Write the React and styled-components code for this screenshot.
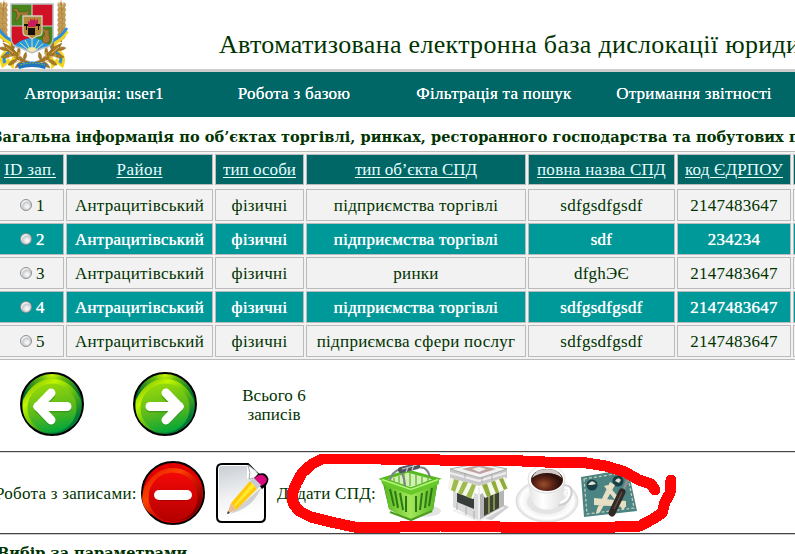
import React from 'react';
import styled, { createGlobalStyle, css } from 'styled-components';

const GlobalStyle = createGlobalStyle`
  * { box-sizing: border-box; }
  html, body { margin: 0; padding: 0; background: #fff; overflow: hidden; }
`;

const Page = styled.div`
  width: 795px;
  height: 554px;
  overflow: hidden;
  background: #fff;
  color: #003300;
  font-family: 'Liberation Serif', 'Times New Roman', serif;
  font-size: 17px;
  line-height: 18px;
  letter-spacing: 0.27px;
  white-space: nowrap;
`;

const Header = styled.header`
  display: flex;
  height: 72px;
  border-bottom: 3px solid #cccccc;
`;

const Emblem = styled.svg`
  flex: none;
  width: 70px;
  height: 69px;
`;

const Title = styled.h1`
  margin: 30px 0 0 149px;
  font-size: 26px;
  line-height: 30px;
  font-weight: 400;
  letter-spacing: 0.31px;
`;

const Nav = styled.nav`
  display: grid;
  grid-template-columns: repeat(4, 200px);
  align-items: center;
  height: 45px;
  margin-left: -6px;
  width: 810px;
  padding-bottom: 1px;
  background: #006666;
  color: #fff;
  text-align: center;
  text-shadow: 0 0 0.6px #fff;
`;

const Caption = styled.h2`
  margin: 0;
  height: 34px;
  padding-top: 11px;
  margin-left: -8px;
  font-family: 'DejaVu Serif', serif;
  font-size: 14.5px;
  line-height: 18px;
  font-weight: 700;
  letter-spacing: 0.05px;
`;

const Table = styled.div`
  display: flex;
  flex-direction: column;
  gap: 2px;
  height: 209px;
  width: 910px;
  margin-left: -7px;
  padding: 2px;
  background: #f2f2f2;
  border: 1px solid #bbbbbb;
`;

const TableRow = styled.div`
  display: grid;
  grid-template-columns: 68px 147px 89px 220px 147px 114px 100px;
  gap: 2px;
  height: 32px;
`;

const HeadRow = styled(TableRow)`
  height: 31px;
  margin-bottom: 2px;
`;

const cell = css`
  display: flex;
  align-items: center;
  justify-content: center;
  border: 1px solid #bbbbbb;
`;

const HeadCell = styled.div`
  ${cell}
  background: #006666;
  color: #e6ffff;
  text-decoration: underline;
  text-decoration-thickness: 1px;
  text-underline-offset: 2px;
  letter-spacing: ${(p) => p.$track ?? 0.25}px;
`;

const Cell = styled.div`
  ${cell}
  padding: 2px 0 0 ${(p) => (p.$first ? 5 : 0)}px;
  background: ${(p) => (p.$alt ? '#009999' : '#f2f2f2')};
  color: ${(p) => (p.$alt ? '#fff' : '#003300')};
  text-shadow: ${(p) => (p.$alt ? '0 0 0.7px #fff' : 'none')};
`;

const Radio = styled.span`
  width: 12px;
  height: 12px;
  margin: -2px 4px 0 0;
  border: 1px solid #8e8f8f;
  border-radius: 50%;
  background: radial-gradient(circle at 60% 65%, #f4f4f4 0 15%, #c4c9cf 50%, #eee 62%);
`;

const Pager = styled.div`
  display: flex;
  align-items: center;
  height: 91px;
  padding: 0 0 3px 20px;
  gap: 49px;
`;

const Round = styled.svg`
  flex: none;
  width: 64px;
  height: 64px;
`;

const Total = styled.div`
  width: 70px;
  margin-left: -7px;
  padding-top: 2px;
  text-align: center;
  line-height: 19px;
  letter-spacing: 0.1px;
`;

const Toolbar = styled.div`
  position: relative;
  display: flex;
  align-items: center;
  height: 82px;
  border-top: 1px solid #444;
  box-shadow: inset 0 1px 0 #ddd;
`;

const ToolLabel = styled.span`
  flex: none;
  width: ${(p) => p.$width}px;
  padding-top: 2px;
  padding-left: ${(p) => p.$indent ?? 0}px;
  margin-left: ${(p) => p.$shift ?? 0}px;
`;

const ToolIcon = styled.svg`
  flex: none;
  width: ${(p) => p.$width}px;
  height: 64px;
  margin-right: ${(p) => p.$after ?? 0}px;
`;

const Marker = styled.svg`
  position: absolute;
  left: 280px;
  top: -1px;
  width: 400px;
  height: 86px;
  pointer-events: none;
`;

const Filters = styled.section`
  border-top: 1px solid #444;
  box-shadow: inset 0 1px 0 #ccc;
  padding-top: 10px;
  height: 30px;
`;

const FiltersTitle = styled.h2`
  margin: 0 0 0 -3px;
  font-family: 'DejaVu Serif', serif;
  font-size: 14.5px;
  line-height: 18px;
  letter-spacing: 0;
`;

const Wheat = ({ flip }) => (
  <g transform={flip ? 'translate(65 0) scale(-1 1)' : undefined}>
    <path d="M4 2Q1 22 4 42" stroke="#a67c2b" strokeWidth="2" fill="none" />
    {[6, 11, 16, 21, 26, 31, 36].map((y) => (
      <g key={y} fill="#c79d55" stroke="#a37a38" strokeWidth=".4">
        <ellipse cx="1.4" cy={y} rx="1.7" ry="3.2" transform={`rotate(-20 1.4 ${y})`} />
        <ellipse cx="5.3" cy={y} rx="1.7" ry="3.2" transform={`rotate(20 5.3 ${y})`} />
      </g>
    ))}
    <path d="M4 0V4M1 2l2 5M7 2L5 7" stroke="#dcc08a" strokeWidth=".8" />
  </g>
);

const Laurel = ({ flip }) => (
  <g transform={flip ? 'translate(65 0) scale(-1 1)' : undefined}>
    <path d="M-2 31Q4 40 9 42Q14 46 6 52Q0 57 3 65L8 61L12 65Q13 56 20 52" fill="none" stroke="#f3d51c" strokeWidth="4" />
    <path d="M-2 28Q4 37 11 40Q17 46 9 52Q2 57 5 63" fill="none" stroke="#2d8fdc" strokeWidth="3" />
    <g fill="#a87a27" stroke="#7d5a1c" strokeWidth=".4">
      <path d="M30 62Q22 64 14 57Q6 51 3 43Q12 46 17 53Q23 60 30 62Z" />
      <path d="M9 50Q3 52-1 48Q4 45 9 50ZM13 55Q6 60 1 57Q6 52 13 55ZM18 59Q13 66 8 65Q11 59 18 59ZM23 61Q20 68 15 68Q17 62 23 61ZM13 51Q10 46 12 42Q16 46 13 51ZM18 56Q16 50 19 47Q22 52 18 56ZM24 60Q22 55 26 52Q28 58 24 60Z" />
    </g>
    <path d="M6 47l7 6M9 56l7 1M15 63l5-3M19 52v5" stroke="#e0bb69" strokeWidth="1" />
  </g>
);

const CoatOfArms = () => (
  <Emblem viewBox="0 0 70 69">
    <Wheat />
    <Wheat flip />
    <Laurel />
    <Laurel flip />
    <path d="M17 64Q32 59 47 64L45 69Q32 65 19 69Z" fill="#2474bd" />
    <path d="M20 65Q32 61 45 65" fill="none" stroke="#8fb83c" strokeWidth="1" strokeDasharray="2 1" />
    <clipPath id="shield"><path d="M11 4H53V38Q53 47 43 48L32 53L21 48Q11 47 11 38Z" /></clipPath>
    <g clipPath="url(#shield)">
      <path d="M11 4H32V26H11Z" fill="#45851c" />
      <path d="M32 4H53V26H32ZM11 26H32V55H11Z" fill="#cf1225" />
      <path d="M32 26H53V55H32Z" fill="#45851c" />
      <path d="M10 50Q20 38 32 38Q44 38 54 50V58H10Z" fill="#2a9ade" />
      <path d="M32 53L17 48M32 53L20 43M32 53L25 40M32 53V38M32 53L39 40M32 53L44 43M32 53L48 48" stroke="#d4e5a4" strokeWidth="1" />
      <circle cx="32" cy="53" r="6" fill="#f1e9a0" />
    </g>
    <path d="M11 4H53V38Q53 47 43 48L32 53L21 48Q11 47 11 38Z" fill="none" stroke="#b9bdc0" strokeWidth="1.5" />
    <path d="M32 4V16M11 26H23M42 26H53" stroke="#ccc" strokeWidth="1.2" />
    <path d="M14 9l3-1 2 4h7l4-2-2 4 1 7-2-5-6-1-3 5-3 1 2-5-1-5-3 1Z" fill="#a47a31" stroke="#5c441b" strokeWidth=".5" />
    <path d="M43 28l3 2 3-1 0 6 1 5-2 3h-5l-1-5 3-4-3-4Z" fill="#a57832" stroke="#5b3f11" strokeWidth=".5" />
    <path d="M23 16H42V32Q42 36 37 36L32 39L28 36Q23 36 23 32Z" fill="#b58a38" stroke="#d2d0c6" strokeWidth="1.3" />
    <path d="M28 27V21l2 1 0-3 3 1 2-2v3l3-2v5l-3 3Z" fill="#c81d56" />
    <path d="M28 28h7v7h-7ZM24 24h4v2h-1v4h-1v-4h-2ZM36 24h4v2h-1v4h-1v-4h-2Z" fill="#160e08" />
  </Emblem>
);

const ArrowIcon = ({ id, right }) => (
  <Round viewBox="0 0 64 64">
    <defs>
      <linearGradient id={`${id}-rim`} x1=".15" y1=".1" x2=".85" y2=".9">
        <stop offset="0" stopColor="#8cc800" /><stop offset=".2" stopColor="#c0f600" />
        <stop offset=".5" stopColor="#6cc40c" /><stop offset=".9" stopColor="#007a38" />
      </linearGradient>
      <linearGradient id={`${id}-core`} x1=".35" y1="0" x2=".6" y2="1">
        <stop offset="0" stopColor="#96da0a" /><stop offset=".55" stopColor="#5cb91a" /><stop offset="1" stopColor="#00a53b" />
      </linearGradient>
      <radialGradient id={`${id}-top`} cx=".5" cy="0" r=".55">
        <stop offset="0" stopColor="#d8ff00" /><stop offset=".35" stopColor="#65b80e" /><stop offset="1" stopColor="#006d32" />
      </radialGradient>
    </defs>
    <circle cx="32" cy="32" r="31" fill={`url(#${id}-top)`} stroke="#000" strokeWidth="2" />
    <path d="M3 28Q13 7 32 7T61 28Q64 48 48 57T16 57T3 28Z" fill={`url(#${id}-rim)`} />
    <circle cx="32" cy="36" r="24.5" fill={`url(#${id}-core)`} />
    <g transform={right ? 'translate(64 0) scale(-1 1)' : undefined} fill="none" strokeLinecap="round" strokeLinejoin="round">
      <path d="M31 22L18 35L31 48M18 35H47" stroke="#267d18" strokeOpacity=".45" strokeWidth="9" transform="translate(0 1)" />
      <path d="M31 21L18 34.5L31 48" stroke="#fff" strokeWidth="9" />
      <path d="M18 34.5H47" stroke="#fff" strokeWidth="9" />
      <path d="M13 34.5L23 25V44Z" fill="#fff" />
    </g>
  </Round>
);

const StopIcon = () => (
  <ToolIcon $width={64} $after={11} viewBox="0 0 64 64">
    <defs>
      <linearGradient id="stop-rim" x1=".1" y1=".1" x2=".9" y2=".9">
        <stop offset="0" stopColor="#e81d00" /><stop offset=".3" stopColor="#fb4300" /><stop offset=".55" stopColor="#d51500" /><stop offset=".9" stopColor="#830000" />
      </linearGradient>
      <linearGradient id="stop-core" x1="0" y1="0" x2="0" y2="1">
        <stop offset="0" stopColor="#f30808" /><stop offset="1" stopColor="#b40000" />
      </linearGradient>
    </defs>
    <circle cx="32" cy="32" r="31" fill="#e10000" stroke="#000" strokeWidth="2" />
    <path d="M3 27Q14 7 32 7T61 27Q64 47 49 56T15 56T3 27Z" fill="url(#stop-rim)" />
    <circle cx="32" cy="36" r="24.5" fill="url(#stop-core)" />
    <rect x="13" y="30" width="38" height="10" rx="5" fill="#8a0000" opacity=".5" />
    <rect x="13" y="29" width="38" height="10" rx="5" fill="#fff" />
  </ToolIcon>
);

const EditIcon = () => (
  <ToolIcon $width={53} viewBox="0 0 53 64">
    <defs>
      <linearGradient id="sheet" x1="0" y1="0" x2=".2" y2="1">
        <stop offset="0" stopColor="#c9ced4" /><stop offset=".65" stopColor="#f3f4f5" /><stop offset="1" stopColor="#fff" />
      </linearGradient>
    </defs>
    <path d="M6 3H32L43 14L49 18V56Q49 61 44 61H6Q1 61 1 56V8Q1 3 6 3Z" fill="#fff" stroke="#000" strokeWidth="2" />
    <path d="M6 5H31V18H47V54Q47 58 43 58H7Q3 58 3 54V8Q3 5 6 5Z" fill="url(#sheet)" />
    <path d="M32 4Q35 12 33 18Q39 16 45 18L40 10Z" fill="#f8f8f8" stroke="#a6abb2" />
    <path d="M14 53L45 27Q37 47 14 53Z" fill="#888" opacity=".35" />
    <path d="M38 17L42 13Q50 10 52.5 18Q52 24 46 28Z" fill="#000" />
    <path d="M38 17L42 14.5Q48 12 51 18.5Q50 23 45 25Z" fill="#dc087e" />
    <path d="M34 20L38 17L45 24L41 28Z" fill="#c6cbd5" />
    <path d="M15 42L34 20L41 28L20 49Z" fill="#ffc90a" />
    <path d="M18 44L36 22L39 25L19 46Z" fill="#ffe82d" />
    <path d="M15 42L20 49L11 53Z" fill="#e8bd91" />
    <path d="M12 50L14 52L11 53Z" fill="#333" />
  </ToolIcon>
);

const BasketIcon = () => (
  <ToolIcon $width={64} $after={4} viewBox="-1 0 64 64">
    <defs>
      <linearGradient id="basket" x2="1"><stop stopColor="#55b81e" /><stop offset=".5" stopColor="#a5e65b" /><stop offset="1" stopColor="#52b421" /></linearGradient>
    </defs>
    <ellipse cx="42" cy="50" rx="19" ry="6" fill="#999" opacity=".28" />
    <path d="M2 18L28 9L58 18L53 49L31 60L9 48Z" fill="#327c12" />
    <path d="M3 18L28 10L57 18L31 28Z" fill="#d2efb4" stroke="#55b920" strokeWidth="3" />
    <path d="M14 17v5M19 15v8M24 13v11M30 12v13M36 13v11M42 14v8M48 16v4" stroke="#6fbd3f" strokeWidth="1.5" />
    <path d="M3 20L31 30L58 19L53 49L31 60L9 48Z" fill="url(#basket)" />
    <path d="M10 28L14 45M15 30L18 47M20 32L23 49M26 35V51M36 35V51M42 32L40 49M47 30L45 47M52 27L49 45" stroke="#2b7912" strokeWidth="2" />
    <path d="M1 18L31 28L59 18V23L31 34L2 23Z" fill="#68c92b" />
    <path d="M2 18.5L31 28.5L58 18.5" stroke="#b6f47b" strokeWidth="1.5" fill="none" />
    <path d="M10 51L31 59L52 50" stroke="#4a9c1b" strokeWidth="2" fill="none" />
    <path d="M10 19Q12 11 20 8M38 6L44 7Q48 9 50 16M25 25Q25 17 20 9" fill="none" stroke="#7d8588" strokeWidth="2" />
    <path d="M21 9L37 5" stroke="#4f565b" strokeWidth="6" strokeLinecap="round" />
    <path d="M22 8L37 4M26 11L28 6M32 9L34 4" stroke="#c7cdcf" strokeWidth="1.2" />
  </ToolIcon>
);

const ShopIcon = () => (
  <ToolIcon $width={64} $after={4} viewBox="0 0 64 64">
    <path d="M38 58L58 44L62 46L45 59Z" fill="#888" opacity=".4" />
    <path d="M6 21L32 34V60L6 46Z" fill="#dadada" />
    <path d="M32 34L57 20V46L32 60Z" fill="#b6b6b6" />
    <path d="M10 30L27 38V48L10 41Z" fill="#383f3a" />
    <path d="M37 36L52 27V47L37 55Z" fill="#3e4432" />
    <path d="M42 34V52M47 31V49" stroke="#9baa5d" strokeWidth="1.5" />
    <path d="M3 8L32 2L60 8V17L32 25L3 17Z" fill="#c9c9c9" />
    <path d="M3 8L32 2L60 8L33 17Z" fill="#f2f2f2" stroke="#aaa" />
    <path d="M15 8L32 4L49 8L33 13Z" fill="#bda29e" />
    <path d="M25 8L32 6L39 8L32 11Z" fill="#eee" />
    <path d="M3 17L30 24L26 38L0 28Z" fill="#f6f7ea" />
    <path d="M7 18L4 29L8 31L12 19.5ZM16 20.5L11 32L15 34L21 21.5ZM25 23L19 35.5L24 37.5L29 24Z" fill="#9dbb4e" />
    <path d="M32 25L58 16L62 27L38 37Z" fill="#f8f9ed" />
    <path d="M35 24L40 36L44 34.5L40 22.5ZM44 21L49 32.5L52 31L48 19.5ZM52 18L57 29L60.5 27.5L56 17Z" fill="#8ead3a" />
    <path d="M32 26V60M6 49L32 60L57 46M3 12L32 20L59 12" stroke="#efefef" strokeWidth="2" fill="none" />
    <path d="M10 42V49M19 46V54M27 50V58M35 21V16M45 19V14M18 17V12" stroke="#999" strokeWidth=".7" />
  </ToolIcon>
);

const CoffeeIcon = () => (
  <ToolIcon $width={64} $after={1} viewBox="0 0 64 64">
    <defs>
      <radialGradient id="saucer"><stop stopColor="#ccc" /><stop offset=".6" stopColor="#f0f0f0" /><stop offset=".85" stopColor="#fff" /><stop offset="1" stopColor="#dedede" /></radialGradient>
      <radialGradient id="coffee" cx=".4" cy=".7"><stop stopColor="#9d4d2c" /><stop offset=".6" stopColor="#572316" /><stop offset="1" stopColor="#30110b" /></radialGradient>
      <linearGradient id="cup" x2="1"><stop stopColor="#e4e4e4" /><stop offset=".4" stopColor="#fff" /><stop offset="1" stopColor="#dedede" /></linearGradient>
    </defs>
    <ellipse cx="32" cy="40" rx="31" ry="21" fill="url(#saucer)" stroke="#ddd" />
    <ellipse cx="32" cy="41" rx="20" ry="12" fill="#e4e4e4" />
    <path d="M46 28Q56 23 55 33Q53 42 43 43" fill="none" stroke="#cdcdcd" strokeWidth="5" />
    <path d="M46 28Q55 24 54 33Q52 41 43 42" fill="none" stroke="#fff" strokeWidth="3" />
    <path d="M13 19Q14 42 24 47Q32 50 40 47Q49 42 50 19Z" fill="url(#cup)" />
    <ellipse cx="31.5" cy="18" rx="18.5" ry="14" fill="#fff" stroke="#ddd" />
    <ellipse cx="32" cy="19" rx="16" ry="11" fill="url(#coffee)" />
    <path d="M17 17Q20 8 32 8T47 17Q41 12 32 12T17 17Z" fill="#d1ccc9" />
  </ToolIcon>
);

const CraftIcon = () => (
  <ToolIcon $width={62} viewBox="0 0 62 64">
    <path d="M1 16L48 8L57 50L4 56Z" fill="#4c8484" />
    <path d="M4 18L47 11L54 47L7 53Z" fill="none" stroke="#c6d2b4" strokeWidth="1.2" strokeDasharray="3 2" />
    <circle cx="12" cy="24" r="5.5" fill="#183f45" /><path d="M8 24Q12 17 16 23L12 24Z" fill="#dce0cd" />
    <circle cx="38" cy="20" r="5.5" fill="#183f45" /><path d="M35 20Q38 15 41 19L39 22Z" fill="#dce0cd" />
    <path d="M30 21L35 24L20 51L16 53L17 48ZM24 25L28 24L46 45L43 49ZM14 37L46 40V46L14 44Z" fill="#e7dfc3" />
    <path d="M44 28L49 15" stroke="#888f91" strokeWidth="3" />
    <path d="M42 31L32 52" stroke="#302925" strokeWidth="7" strokeLinecap="round" />
    <path d="M42 31L34 48" stroke="#594d46" strokeWidth="1.5" />
  </ToolIcon>
);

const columns = [
  ['ID зап.', 0.35],
  ['Район', 0.46],
  ['тип особи', 0.05],
  ['тип об’єкта СПД', -0.04],
  ['повна назва СПД', 0.29],
  ['код ЄДРПОУ', 0.18],
  ['', 0],
];

const records = [
  ['1', 'Антрацитівський', 'фізичні', 'підприємства торгівлі', 'sdfgsdfgsdf', '2147483647', ''],
  ['2', 'Антрацитівський', 'фізичні', 'підприємства торгівлі', 'sdf', '234234', ''],
  ['3', 'Антрацитівський', 'фізичні', 'ринки', 'dfghЭЄ', '2147483647', ''],
  ['4', 'Антрацитівський', 'фізичні', 'підприємства торгівлі', 'sdfgsdfgsdf', '2147483647', ''],
  ['5', 'Антрацитівський', 'фізичні', 'підприємсва сфери послуг', 'sdfgsdfgsdf', '2147483647', ''],
];

export default function App() {
  return (
    <Page>
      <GlobalStyle />
      <Header>
        <CoatOfArms />
        <Title>Автоматизована електронна база дислокації юриди</Title>
      </Header>
      <Nav>
        <span>Авторизація: user1</span>
        <span>Робота з базою</span>
        <span>Фільтрація та пошук</span>
        <span>Отримання звітності</span>
      </Nav>
      <Caption>
        Загальна інформація по об’єктах торгівлі, ринках, ресторанного господарства та побутових п
      </Caption>
      <Table>
        <HeadRow>
          {columns.map(([name, track], i) => (
            <HeadCell key={i} $track={track}>{name}</HeadCell>
          ))}
        </HeadRow>
        {records.map((record, r) => (
          <TableRow key={r}>
            {record.map((value, i) => (
              <Cell key={i} $alt={r % 2 === 1} $first={i === 0}>
                {i === 0 && <Radio />}
                {value}
              </Cell>
            ))}
          </TableRow>
        ))}
      </Table>
      <Pager>
        <ArrowIcon id="prev" />
        <ArrowIcon id="next" right />
        <Total>Всього 6<br />записів</Total>
      </Pager>
      <Toolbar>
        <ToolLabel $width={146} $shift={-5}>Робота з записами:</ToolLabel>
        <StopIcon />
        <EditIcon />
        <ToolLabel $width={110} $indent={8}>Додати СПД:</ToolLabel>
        <BasketIcon />
        <ShopIcon />
        <CoffeeIcon />
        <CraftIcon />
        <Marker viewBox="280 451 400 86">
          <path
            d="M655 490L651 484L639 480L625 472L606 466L580 462L545 462L500 460L440 460L380 459L322 459L312 464L302 473L296 484L292 494L293 503L299 511L311 517L331 522L354 527L400 527L440 526L500 527L590 528L640 526L653 519L662 513L665 502L670 493L671 480"
            fill="none"
            stroke="#ff0505"
            strokeWidth="11"
            strokeLinecap="round"
            strokeLinejoin="round"
            shapeRendering="crispEdges"
          />
        </Marker>
      </Toolbar>
      <Filters>
        <FiltersTitle>Вибір за параметрами</FiltersTitle>
      </Filters>
    </Page>
  );
}
